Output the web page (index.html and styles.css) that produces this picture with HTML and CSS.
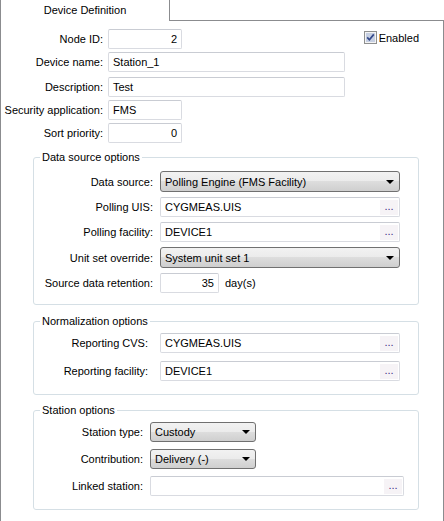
FILE: index.html
```html
<!DOCTYPE html>
<html lang="en">
<head>
  <meta charset="UTF-8" />
  <title>Device Definition</title>
  <link rel="stylesheet" href="styles.css">
</head>
<body>
  <div class="tabstrip">
    <div class="tab">Device Definition</div>
    <div class="tab-fill"></div>
  </div>

  <div class="panel">
    <div class="general">
      <div class="row">
        <span class="lbl">Node ID:</span>
        <div class="field num small">2</div>
        <div class="enabled">
          <svg width="13" height="13" viewBox="0 0 13 13">
            <rect x="0.5" y="0.5" width="12" height="12" fill="#f4f4f4" stroke="#8e8f8f"/>
            <rect x="2" y="2" width="9" height="9" fill="#c6cfe2"/>
            <path d="M3.2 6.4 L5.4 8.8 L9.8 3.4" fill="none" stroke="#33488a" stroke-width="1.7"/>
          </svg>
          <span>Enabled</span>
        </div>
      </div>
      <div class="row">
        <span class="lbl">Device name:</span>
        <div class="field wide">Station_1</div>
      </div>
      <div class="row gap-lg">
        <span class="lbl">Description:</span>
        <div class="field wide">Test</div>
      </div>
      <div class="row">
        <span class="lbl">Security application:</span>
        <div class="field small">FMS</div>
      </div>
      <div class="row">
        <span class="lbl">Sort priority:</span>
        <div class="field num small">0</div>
      </div>
    </div>

    <fieldset class="group ds">
      <legend>Data source options</legend>
      <div class="row">
        <span class="lbl">Data source:</span>
        <div class="combo">Polling Engine (FMS Facility)<span class="arrow"></span></div>
      </div>
      <div class="row">
        <span class="lbl">Polling UIS:</span>
        <div class="field browse">CYGMEAS.UIS<span class="dots">...</span></div>
      </div>
      <div class="row">
        <span class="lbl">Polling facility:</span>
        <div class="field browse">DEVICE1<span class="dots">...</span></div>
      </div>
      <div class="row">
        <span class="lbl">Unit set override:</span>
        <div class="combo">System unit set 1<span class="arrow"></span></div>
      </div>
      <div class="row">
        <span class="lbl">Source data retention:</span>
        <div class="field num days">35</div>
        <span class="unit">day(s)</span>
      </div>
    </fieldset>

    <fieldset class="group norm">
      <legend>Normalization options</legend>
      <div class="row">
        <span class="lbl">Reporting CVS:</span>
        <div class="field browse">CYGMEAS.UIS<span class="dots">...</span></div>
      </div>
      <div class="row">
        <span class="lbl">Reporting facility:</span>
        <div class="field browse">DEVICE1<span class="dots">...</span></div>
      </div>
    </fieldset>

    <fieldset class="group station">
      <legend>Station options</legend>
      <div class="row">
        <span class="lbl">Station type:</span>
        <div class="combo">Custody<span class="arrow"></span></div>
      </div>
      <div class="row">
        <span class="lbl">Contribution:</span>
        <div class="combo">Delivery (-)<span class="arrow"></span></div>
      </div>
      <div class="row">
        <span class="lbl">Linked station:</span>
        <div class="field browse linked"><span class="dots">...</span></div>
      </div>
    </fieldset>
  </div>
</body>
</html>
```

FILE: styles.css
```css
body {
  margin: 0;
  font-family: "Liberation Sans", Arial, sans-serif;
  font-size: 11px;
  color: #000;
  background: #fff;
}
.tabstrip {
  display: flex;
  height: 21px;
}
.tab {
  width: 168px;
  border-left: 1px solid #8b8c8f;
  border-right: 1px solid #8b8c8f;
  text-align: center;
  line-height: 20px;
}
.tab-fill {
  flex: 1;
  border-bottom: 1px solid #8b8c8f;
}
.panel {
  box-sizing: border-box;
  width: 444px;
  height: 500px;
  border-left: 1px solid #8b8c8f;
  border-right: 1px solid #8b8c8f;
  padding: 8px 24px 0 0;
}
.row {
  display: flex;
  align-items: center;
}
.general .row {
  height: 20px;
}
.general .row + .row {
  margin-top: 3px;
}
.general .row.gap-lg {
  margin-top: 5px;
}
.general .lbl {
  width: 102px;
  margin-right: 5px;
}
.lbl {
  text-align: right;
  white-space: nowrap;
}
.field {
  box-sizing: border-box;
  height: 20px;
  border: 1px solid #d9dbe1;
  border-top-color: #c9ccd3;
  border-radius: 2px;
  padding: 0 4px;
  line-height: 18px;
  white-space: nowrap;
  display: flex;
  align-items: center;
}
.field.num {
  justify-content: flex-end;
}
.small {
  width: 74px;
}
.wide {
  width: 237px;
}
.enabled {
  margin-left: auto;
  display: flex;
  align-items: center;
  gap: 2px;
  align-self: flex-start;
  margin-top: 2px;
}
.enabled svg {
  display: block;
}

/* group boxes */
.group {
  margin: 8px 0 0 32px;
  padding: 0;
  border: 1px solid #d5dfe5;
  border-radius: 3px;
  min-width: 0;
}
.group legend {
  margin-left: 6px;
  padding: 0 2px;
  line-height: 13px;
}
.ds {
  padding: 7px 18px 11px 0;
}
.ds .row + .row {
  margin-top: 5px;
}
.ds .lbl {
  width: 119px;
  margin-right: 7px;
}
.norm {
  margin-top: 10px;
  padding: 5px 18px 13px 0;
}
.norm .row + .row {
  margin-top: 8px;
}
.norm .lbl {
  width: 114px;
  margin-right: 12px;
}
.station {
  margin-top: 9px;
  padding: 5px 14px 13px 0;
}
.station .row + .row {
  margin-top: 7px;
}
.station .lbl {
  width: 109px;
  margin-right: 7px;
}

.combo {
  box-sizing: border-box;
  width: 240px;
  height: 21px;
  display: flex;
  align-items: center;
  padding-left: 4px;
  border: 1px solid #707070;
  border-radius: 3px;
  background: linear-gradient(#f2f2f2 0%, #ebebeb 50%, #dddddd 50%, #cfcfcf 100%);
  white-space: nowrap;
}
.station .combo {
  width: 106px;
  height: 20px;
}
.arrow {
  margin-left: auto;
  margin-right: 5px;
  width: 0;
  height: 0;
  border-left: 4px solid transparent;
  border-right: 4px solid transparent;
  border-top: 4px solid #000;
}
.browse {
  width: 240px;
  padding-right: 1px;
}
.linked {
  width: 254px;
}
.dots {
  margin-left: auto;
  width: 18px;
  height: 15px;
  line-height: 13px;
  text-align: center;
  background: #f6f3f6;
  color: #3d2f85;
}
.days {
  width: 59px;
}
.unit {
  margin-left: 6px;
}
```
